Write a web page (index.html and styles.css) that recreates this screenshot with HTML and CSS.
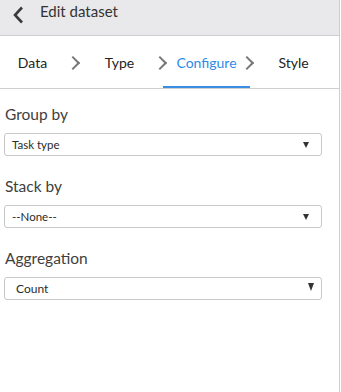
FILE: index.html
```html
<!DOCTYPE html>
<html lang="en">
<head>
    <meta charset="UTF-8">
    <meta name="viewport" content="width=device-width, initial-scale=1.0">
    <title>Edit dataset</title>
    <link rel="stylesheet" href="styles.css">
</head>
<body>
    <div class="panel">
        <div class="header">
            <svg class="back" width="12" height="18" viewBox="0 0 12 18">
                <path d="M10 1.5 L3 9 L10 16.5" fill="none" stroke="#3a3a3a" stroke-width="2.6"/>
            </svg>
            <span class="title">Edit dataset</span>
        </div>

        <div class="tabs">
            <div class="tab">Data</div>
            <div class="tab">Type</div>
            <div class="tab active">Configure</div>
            <div class="tab">Style</div>
        </div>

        <div class="form">
            <div class="field">
                <div class="field-label">Group by</div>
                <div class="select">
                    <span>Task type</span>
                    <span class="arrow"></span>
                </div>
            </div>
            <div class="field">
                <div class="field-label">Stack by</div>
                <div class="select">
                    <span>--None--</span>
                    <span class="arrow"></span>
                </div>
            </div>
            <div class="field">
                <div class="field-label">Aggregation</div>
                <div class="select select-wide">
                    <span>Count</span>
                    <span class="arrow"></span>
                </div>
            </div>
        </div>
    </div>
</body>
</html>
```

FILE: styles.css
```css
body {
    font-family: Lato, 'Open Sans', sans-serif;
    margin: 0;
    background: #fff;
    color: #333;
}
.panel {
    width: 339px;
    min-height: 100vh;
    border-right: 1px solid #cfcfcf;
}
.header {
    height: 35px;
    background: #e9e9eb;
    border-bottom: 1px solid #cfcfcf;
    display: flex;
    align-items: flex-start;
}
.back {
    margin: 6px 0 0 12px;
}
.title {
    margin: 2px 0 0 16px;
    font-size: 15px;
    color: #333;
}
.tabs {
    height: 52px;
    border-bottom: 1px solid #cfcfcf;
    display: flex;
    margin-left: -11px;
    overflow: hidden;
}
.tab {
    position: relative;
    flex: 0 0 87px;
    box-sizing: border-box;
    display: flex;
    align-items: center;
    justify-content: center;
    padding-top: 2px;
    font-size: 14px;
    color: #222;
    border-bottom: 2px solid transparent;
}
.tab + .tab::before {
    content: "";
    position: absolute;
    left: -8px;
    top: 22px;
    width: 8px;
    height: 8px;
    border-top: 2px solid #777;
    border-right: 2px solid #777;
    transform: rotate(45deg);
}
.tab.active {
    color: #2f8be6;
    border-bottom-color: #3a8fe3;
}
.form {
    padding: 15px 17px 0 4px;
}
.field {
    margin-bottom: 20px;
}
.field-label {
    font-size: 15.5px;
    line-height: 20px;
    color: #404040;
    padding-left: 1px;
    margin-bottom: 9px;
}
.select {
    height: 23px;
    box-sizing: border-box;
    border: 1px solid #c8c8c8;
    border-radius: 3px;
    display: flex;
    align-items: center;
    justify-content: space-between;
    padding: 0 12px 0 7px;
    font-size: 11.5px;
    color: #2b2b2b;
}
.arrow {
    width: 0;
    height: 0;
    border-left: 3.5px solid transparent;
    border-right: 3.5px solid transparent;
    border-top: 6px solid #333;
}
.select-wide {
    padding: 0 7px 0 11px;
    font-size: 12px;
}
.select-wide .arrow {
    border-top-width: 8px;
    margin-top: -4px;
}
```
